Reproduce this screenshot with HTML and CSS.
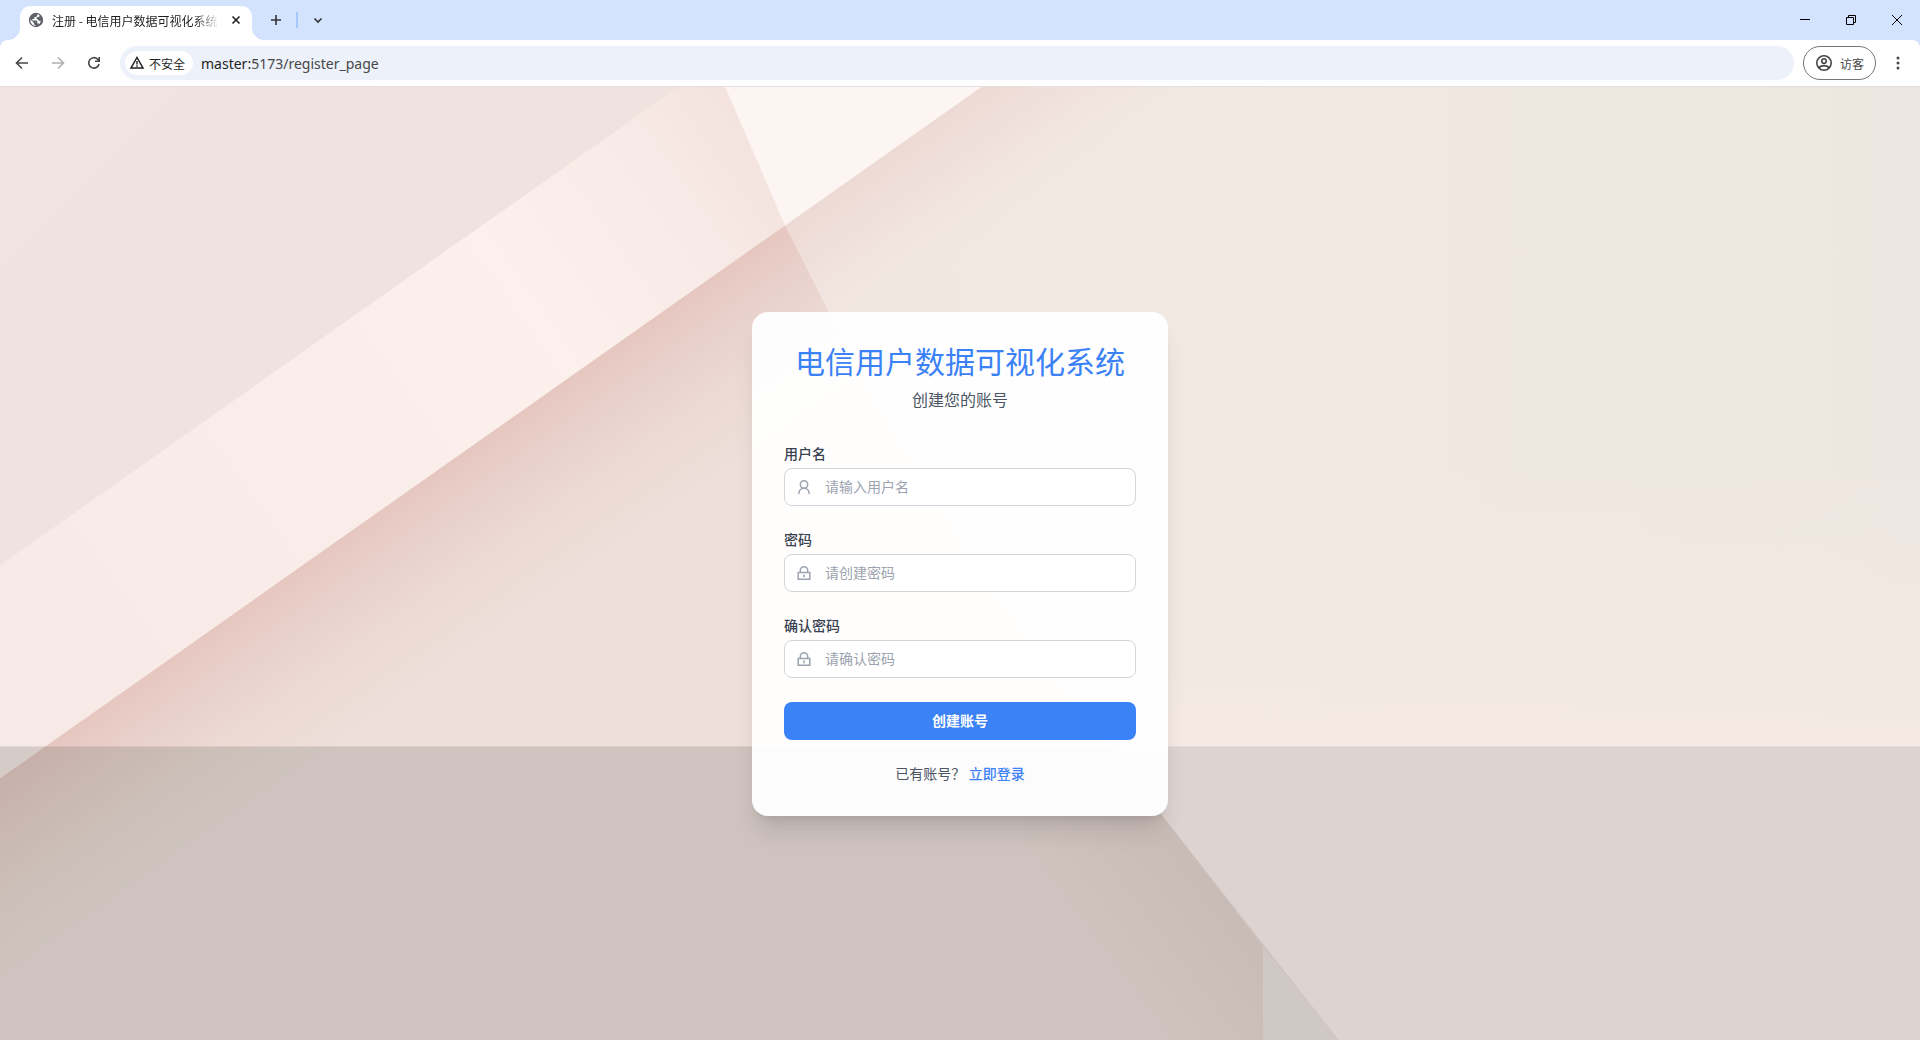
FILE: index.html
```html
<!DOCTYPE html>
<html lang="zh-CN">

<head>
  <meta charset="UTF-8">
  <meta name="viewport" content="width=device-width, initial-scale=1.0">
  <title>注册 - 电信用户数据可视化系统</title>
  <link rel="stylesheet" href="styles.css">
</head>

<body>
  <header class="browser">
    <div class="tab-strip">
      <div class="tab">
        <svg class="favicon" viewBox="0 0 16 16" width="16" height="16">
          <circle cx="8" cy="8" r="7.2" fill="#5f6368" />
          <path d="M9.2 2.3v1.2c0 .8-.6 1.4-1.400 1.4H6.400v1.4c0 .4-.3.7-.7.7H4.300v1.400h4.200c.4 0 .7.3.7.7v2.100h.7c.6 0 1.100.4 1.300 1 .7-.8 1.400-2 1.500-3.400-.8.3-2 .1-2.300-.7-.2-.7-.9-.8-1.500-1.100-.6-.4-.4-1.500.3-1.800.6-.2 1.300-.1 1.900-.5.5-.4.6-1 .4-1.500-.7-.5-1.500-.8-2.300-.9zM2.400 7.500L6 11v.8c0 .8.6 1.400 1.400 1.400v.7C4.500 13.600 2.300 11 2.300 8z" fill="#fff" />
        </svg>
        <span class="tab-title">注册 - 电信用户数据可视化系统</span>
        <button class="icon-button" type="button" aria-label="关闭标签页">
          <svg viewBox="0 0 16 16" width="16" height="16"><path d="M4.500 4.500l7 7M11.500 4.500l-7 7" stroke="#1f1f1f" stroke-width="1.600" /></svg>
        </button>
      </div>
      <button class="icon-button new-tab" type="button" aria-label="打开新的标签页">
        <svg viewBox="0 0 16 16" width="16" height="16"><path d="M8 3v10M3 8h10" stroke="#333" stroke-width="1.600" /></svg>
      </button>
      <span class="strip-divider"></span>
      <button class="icon-button" type="button" aria-label="搜索标签页">
        <svg viewBox="0 0 16 16" width="16" height="16"><path d="M4.500 6.500L8 10l3.500-3.500" fill="none" stroke="#333" stroke-width="1.600" /></svg>
      </button>
      <div class="window-buttons">
        <button class="window-button" type="button" aria-label="最小化">
          <svg viewBox="0 0 10 10" width="10" height="10"><path d="M0 4.500h10" stroke="#000" /></svg>
        </button>
        <button class="window-button" type="button" aria-label="还原">
          <svg viewBox="0 0 10 10" width="10" height="10"><path d="M.5 2.500h7v7h-7zM2.500 2.500v-2h7v7h-2" fill="none" stroke="#000" /></svg>
        </button>
        <button class="window-button" type="button" aria-label="关闭">
          <svg viewBox="0 0 10 10" width="10" height="10"><path d="M0 0l10 10M10 0L0 10" stroke="#000" /></svg>
        </button>
      </div>
    </div>
    <div class="toolbar">
      <div class="nav-buttons">
        <button class="icon-button" type="button" aria-label="后退">
          <svg viewBox="0 0 16 16" width="16" height="16"><path d="M14 8H3M8 2.500L2.500 8 8 13.500" fill="none" stroke="#474747" stroke-width="1.600" /></svg>
        </button>
        <button class="icon-button" type="button" aria-label="前进">
          <svg viewBox="0 0 16 16" width="16" height="16"><path d="M2 8h11M8 2.500L13.500 8 8 13.500" fill="none" stroke="#b0b0b0" stroke-width="1.600" /></svg>
        </button>
        <button class="icon-button" type="button" aria-label="重新加载">
          <svg viewBox="0 0 16 16" width="16" height="16"><path d="M13 9a5.200 5.200 0 1 1-1.300-4.700L13.200 6M13.200 2v4.200H9" fill="none" stroke="#474747" stroke-width="1.600" /></svg>
        </button>
      </div>
      <div class="address-bar">
        <button class="site-info" type="button">
          <svg viewBox="0 0 16 16" width="16" height="16"><path d="M8 2.500L14 13H2z" fill="none" stroke="#1f1f1f" stroke-width="1.500" /><path d="M8 6v3.500M8 10.300v1.500" stroke="#1f1f1f" stroke-width="1.400" /></svg>
          不安全
        </button>
        <span class="url"><span class="host">master:</span>5173/register_page</span>
      </div>
      <button class="profile" type="button">
        <svg viewBox="0 0 18 18" width="18" height="18"><circle cx="9" cy="9" r="7.200" fill="none" stroke="#474747" stroke-width="1.600" /><circle cx="9" cy="7" r="2.300" fill="none" stroke="#474747" stroke-width="1.600" /><path d="M4 14c1-1.800 3-2.400 5-2.400s4 .6 5 2.400" fill="none" stroke="#474747" stroke-width="1.600" /></svg>
        访客
      </button>
      <button class="icon-button" type="button" aria-label="菜单">
        <svg viewBox="0 0 16 16" width="16" height="16" fill="#474747"><circle cx="8" cy="3" r="1.500" /><circle cx="8" cy="8" r="1.500" /><circle cx="8" cy="13" r="1.500" /></svg>
      </button>
    </div>
  </header>

  <main class="page">
    <svg class="backdrop" viewBox="0 0 1920 954" preserveAspectRatio="xMidYMid slice" aria-hidden="true">
      <defs>
        <linearGradient id="wall" x1="0" y1="0" x2="1" y2="0">
          <stop offset="0" stop-color="#f1e2df" />
          <stop offset="0.600" stop-color="#f1e9e2" />
          <stop offset="1" stop-color="#eee7e1" />
        </linearGradient>
        <linearGradient id="wall-floor" x1="0" y1="0" x2="0" y2="1">
          <stop offset="0.400" stop-color="#f4e9e3" stop-opacity="0" />
          <stop offset="0.700" stop-color="#f4e9e3" />
        </linearGradient>
        <linearGradient id="corner" gradientUnits="userSpaceOnUse" x1="100" y1="0" x2="339" y2="240">
          <stop offset="0" stop-color="#f1e4e0" />
          <stop offset="1" stop-color="#efe3df" />
        </linearGradient>
        <linearGradient id="beam" gradientUnits="userSpaceOnUse" x1="0" y1="580" x2="750" y2="50">
          <stop offset="0" stop-color="#f7e9e6" />
          <stop offset="0.700" stop-color="#fbf0ec" />
          <stop offset="0.880" stop-color="#f8ebe7" />
          <stop offset="1" stop-color="#f4e3df" />
        </linearGradient>
        <linearGradient id="beam-shadow" gradientUnits="userSpaceOnUse" x1="392" y1="416" x2="490" y2="555">
          <stop offset="0" stop-color="#e6c7c0" />
          <stop offset="0.250" stop-color="#e9d0ca" />
          <stop offset="0.600" stop-color="#ecdad3" />
          <stop offset="1" stop-color="#eedfda" />
        </linearGradient>
        <linearGradient id="right-shadow" gradientUnits="userSpaceOnUse" x1="883" y1="70" x2="964" y2="185">
          <stop offset="0" stop-color="#eddad4" />
          <stop offset="0.500" stop-color="#f1e3df" />
          <stop offset="1" stop-color="#f1e9e2" stop-opacity="0" />
        </linearGradient>
        <linearGradient id="curve-shadow" gradientUnits="userSpaceOnUse" x1="1120" y1="890" x2="1220" y2="815">
          <stop offset="0" stop-color="#a89590" stop-opacity="0" />
          <stop offset="1" stop-color="#a89590" stop-opacity="0.150" />
        </linearGradient>
      </defs>
      <rect width="1920" height="954" fill="url(#wall)" />
      <rect width="1920" height="954" fill="url(#wall-floor)" />
      <path d="M982 0H1300V500H960L785 139z" fill="url(#right-shadow)" />
      <path d="M0 0H679L0 479z" fill="url(#corner)" />
      <path d="M679 0H725L785 139 0 692V479z" fill="url(#beam)" />
      <path d="M725 0H982L785 139z" fill="#fdf5f1" />
      <path d="M785 139L829 226Q960 480 1163 730L1339 954H0V692z" fill="url(#beam-shadow)" />
      <path d="M0 660H1110L1163 730 1339 954H0z" fill="#3c4641" fill-opacity="0.180" />
      <path d="M1110 660H1920V954H1339L1163 730z" fill="#3c3c46" fill-opacity="0.120" />
      <path d="M1000 660H1110L1163 730 1263 860V954H1000z" fill="url(#curve-shadow)" />
      <path d="M1263 860L1339 954H1263z" fill="#d0c8c2" />
    </svg>

    <section class="card">
      <h1 class="title">电信用户数据可视化系统</h1>
      <p class="subtitle">创建您的账号</p>
      <form class="register-form">
        <div class="field">
          <label for="username">用户名</label>
          <div class="input-box">
            <svg viewBox="0 0 16 16" width="16" height="16"><circle cx="8" cy="5.500" r="3.700" /><path d="M2.800 15c0-3.400 2.200-5.800 5.200-5.800s5.200 2.400 5.200 5.800" /></svg>
            <input type="text" id="username" name="username" placeholder="请输入用户名">
          </div>
        </div>
        <div class="field">
          <label for="password">密码</label>
          <div class="input-box">
            <svg viewBox="0 0 16 16" width="16" height="16"><path d="M2.200 7.500h11.600v6.800H2.200zM4.300 7.500V5.500a3.700 3.700 0 0 1 7.400 0v2M8 9.600v2.700" /></svg>
            <input type="password" id="password" name="password" placeholder="请创建密码">
          </div>
        </div>
        <div class="field">
          <label for="confirm">确认密码</label>
          <div class="input-box">
            <svg viewBox="0 0 16 16" width="16" height="16"><path d="M2.200 7.500h11.600v6.800H2.200zM4.300 7.500V5.500a3.700 3.700 0 0 1 7.400 0v2M8 9.600v2.700" /></svg>
            <input type="password" id="confirm" name="confirm" placeholder="请确认密码">
          </div>
        </div>
        <button class="submit" type="submit">创建账号</button>
      </form>
      <p class="login-hint">已有账号？ <a href="/login_page">立即登录</a></p>
    </section>
  </main>
</body>

</html>
```
FILE: styles.css
```css
* {
  box-sizing: border-box;
}

body {
  margin: 0;
  min-height: 100vh;
  display: flex;
  flex-direction: column;
  font-family: "Noto Sans", "Noto Sans CJK SC", sans-serif;
}

button,
input {
  font: inherit;
}

button {
  border: none;
  background: none;
  padding: 0;
  cursor: pointer;
}

svg {
  display: block;
  flex: none;
}

/* browser bar */
.browser {
  background-color: #d3e2fd;
  font-family: "Noto Sans CJK SC", sans-serif;
  font-size: 12px;
  color: #1f1f1f;
}

.tab-strip {
  display: flex;
  align-items: center;
  height: 40px;
  padding-left: 20px;
}

.tab {
  position: relative;
  align-self: flex-end;
  display: flex;
  align-items: center;
  gap: 8px;
  width: 232px;
  height: 34px;
  padding: 0 8px 6px;
  border-radius: 10px 10px 0 0;
  background-color: #fff;
}

/* rounded feet of the active tab */
.tab::before,
.tab::after {
  content: "";
  position: absolute;
  bottom: 0;
  width: 12px;
  height: 12px;
}

.tab::before {
  left: -12px;
  background: radial-gradient(circle at 0 0, transparent 12px, #fff 12px);
}

.tab::after {
  right: -12px;
  background: radial-gradient(circle at 100% 0, transparent 12px, #fff 12px);
}

.tab-title {
  flex: 1;
  overflow: hidden;
  white-space: nowrap;
  -webkit-mask-image: linear-gradient(to right, #000 85%, transparent);
  mask-image: linear-gradient(to right, #000 85%, transparent);
}

.icon-button {
  display: flex;
  align-items: center;
  justify-content: center;
}

.new-tab {
  margin: 0 12px 0 16px;
}

.strip-divider {
  width: 2px;
  height: 16px;
  margin-right: 12px;
  background-color: #a8c7fa;
}

.window-buttons {
  display: flex;
  align-self: stretch;
  margin-left: auto;
}

.window-button {
  display: flex;
  align-items: center;
  justify-content: center;
  width: 46px;
}

.toolbar {
  display: flex;
  align-items: center;
  gap: 9px;
  height: 47px;
  padding: 0 14px;
  border-bottom: 1px solid #e2e0de;
  border-radius: 8px 8px 0 0;
  background-color: #fff;
}

.nav-buttons {
  display: flex;
  gap: 20px;
  margin-right: 9px;
}

.address-bar {
  flex: 1;
  display: flex;
  align-items: center;
  gap: 8px;
  height: 34px;
  padding: 0 5px;
  border-radius: 17px;
  background-color: #ecf1fa;
}

.site-info {
  display: flex;
  align-items: center;
  gap: 4px;
  height: 24px;
  padding: 0 8px 0 4px;
  border-radius: 12px;
  background-color: #fff;
  color: #1f1f1f;
}

.url {
  font-family: "Noto Sans", sans-serif;
  font-size: 14px;
  color: #474747;
}

.host {
  color: #1f1f1f;
}

.profile {
  display: flex;
  align-items: center;
  gap: 7px;
  height: 34px;
  margin-right: 5px;
  padding: 0 11px;
  border: 1px solid #747775;
  border-radius: 17px;
  color: #474747;
}

/* register page */
.page {
  flex: 1;
  display: grid;
  overflow: hidden;
}

/* takes its height from the page, never the other way round */
.backdrop {
  grid-area: 1 / 1;
  width: 100%;
  height: 0;
  min-height: 100%;
}

.card {
  grid-area: 1 / 1;
  place-self: center;
  z-index: 1;
  width: 100%;
  max-width: 416px;
  padding: 32px;
  border-radius: 16px;
  background-color: rgba(255, 255, 255, 0.95);
  box-shadow: 0 20px 25px -5px rgba(0, 0, 0, 0.1), 0 8px 10px -6px rgba(0, 0, 0, 0.1);
  font-size: 14px;
  line-height: 20px;
}

.title {
  margin: 0 0 8px;
  font-size: 30px;
  font-weight: 400;
  line-height: 36px;
  text-align: center;
  color: #3b82f6;
}

.subtitle {
  margin: 0 0 32px;
  font-size: 16px;
  line-height: 24px;
  text-align: center;
  color: #4b5563;
}

.register-form {
  display: flex;
  flex-direction: column;
  gap: 24px;
}

.field {
  display: flex;
  flex-direction: column;
  gap: 4px;
}

.field label {
  font-weight: 500;
  color: #374151;
}

.input-box {
  display: flex;
  align-items: center;
  gap: 13px;
  height: 38px;
  padding: 0 11px;
  border: 1px solid #d1d5db;
  border-radius: 8px;
  background-color: #fff;
}

.input-box:focus-within {
  border-color: #3b82f6;
}

.input-box svg {
  fill: none;
  stroke: #9ca3af;
  stroke-width: 1.5;
}

.input-box input {
  flex: 1;
  min-width: 0;
  padding: 0;
  border: none;
  outline: none;
  background: none;
  color: #374151;
}

.input-box input::placeholder {
  color: #9ca3af;
}

.submit {
  height: 38px;
  border-radius: 8px;
  background-color: #3b82f6;
  font-weight: 700;
  color: #fff;
}

.submit:hover {
  background-color: #2563eb;
}

.login-hint {
  margin: 24px 0 0;
  text-align: center;
  color: #4b5563;
}

.login-hint a {
  font-weight: 500;
  color: #3b82f6;
  text-decoration: none;
}
```
